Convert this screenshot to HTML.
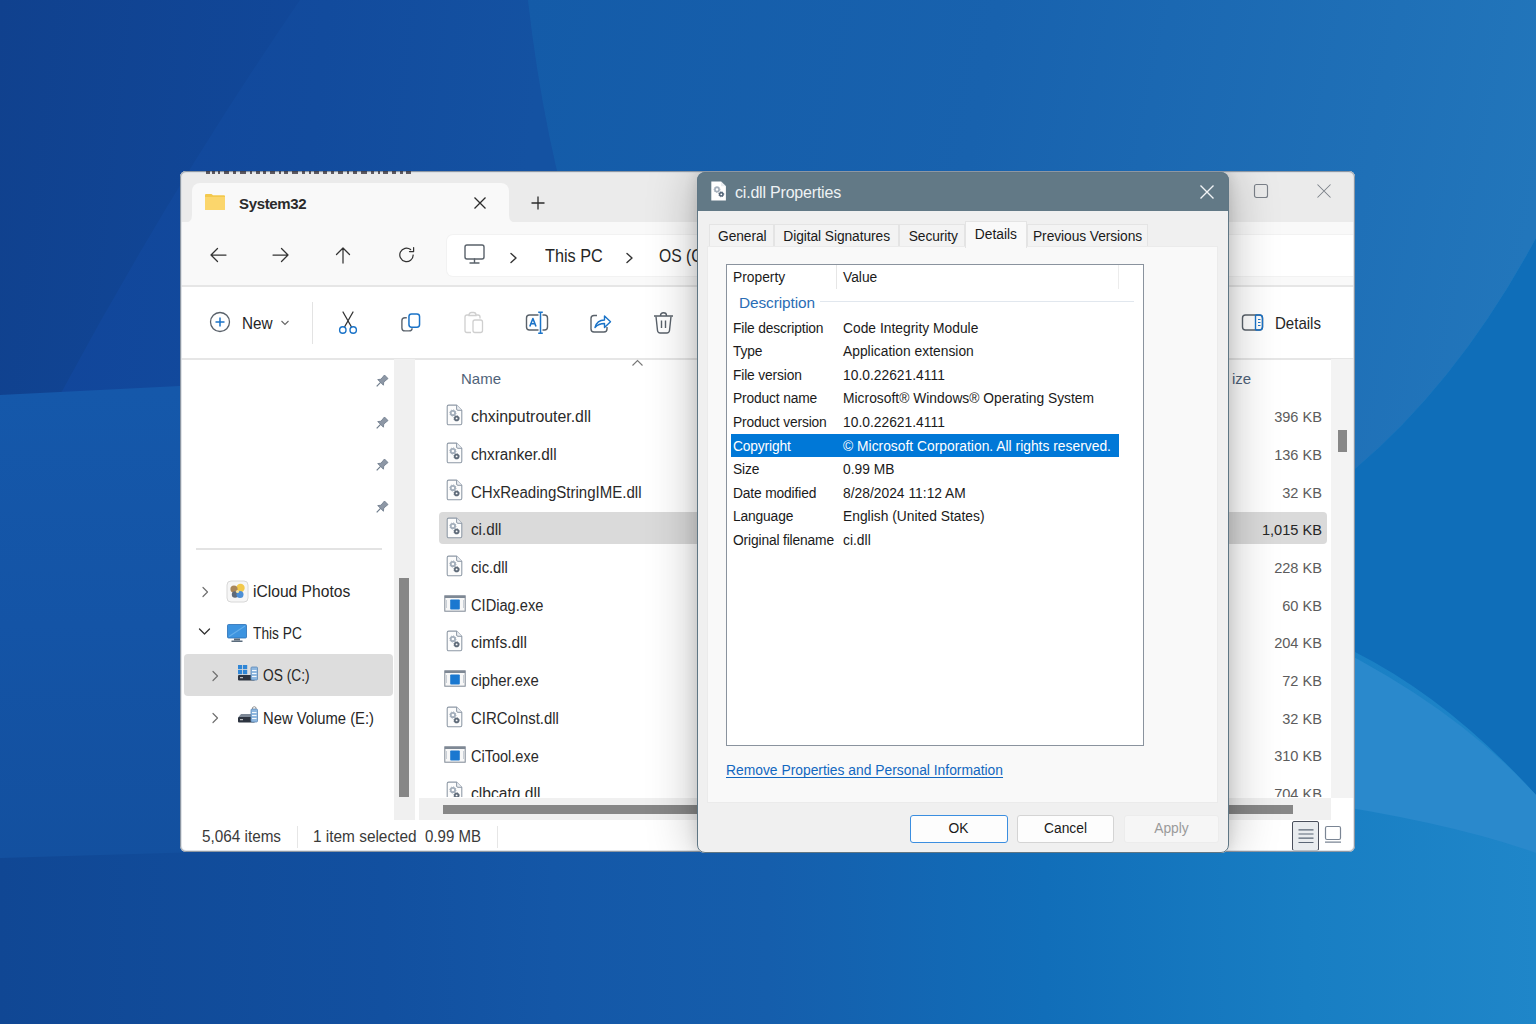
<!DOCTYPE html>
<html><head><meta charset="utf-8">
<style>
*{box-sizing:border-box;margin:0;padding:0}
html,body{width:1536px;height:1024px;overflow:hidden}
body{position:relative;font-family:"Liberation Sans",sans-serif;color:#1b1b1b;background:#1457a6}
.a{position:absolute}
.t{position:absolute;white-space:nowrap;line-height:1}
svg.a{overflow:visible}
</style></head><body>
<svg class="a" style="left:0;top:0" width="1536" height="1024" viewBox="0 0 1536 1024">
<defs>
<linearGradient id="gb" x1="0" y1="0" x2="1536" y2="0" gradientUnits="userSpaceOnUse"><stop offset="0" stop-color="#104794"/><stop offset="0.25" stop-color="#1250a0"/><stop offset="0.36" stop-color="#1457a7"/><stop offset="0.5" stop-color="#155eac"/><stop offset="0.68" stop-color="#116eb9"/><stop offset="0.85" stop-color="#187ec3"/><stop offset="1" stop-color="#1f86c9"/></linearGradient>
<linearGradient id="g1" x1="528" y1="0" x2="1536" y2="200" gradientUnits="userSpaceOnUse"><stop offset="0" stop-color="#145ba8"/><stop offset="0.45" stop-color="#1862ae"/><stop offset="1" stop-color="#2276bb"/></linearGradient>
<linearGradient id="gm" x1="0" y1="390" x2="0" y2="860" gradientUnits="userSpaceOnUse"><stop offset="0" stop-color="#1558aa"/><stop offset="0.5" stop-color="#1454a6"/><stop offset="1" stop-color="#13509f"/></linearGradient>
<linearGradient id="gtl" x1="0" y1="0" x2="540" y2="60" gradientUnits="userSpaceOnUse"><stop offset="0" stop-color="#10418e"/><stop offset="0.6" stop-color="#11489a"/><stop offset="1" stop-color="#1351a1"/></linearGradient>
<linearGradient id="gtl2" x1="0" y1="0" x2="540" y2="60" gradientUnits="userSpaceOnUse"><stop offset="0" stop-color="#11449a"/><stop offset="0.6" stop-color="#124b9d"/><stop offset="1" stop-color="#1452a2"/></linearGradient>
</defs>
<rect width="1536" height="1024" fill="url(#gb)"/>
<path d="M0 0 L528 0 Q 545 150 585 270 L 640 392 L0 395 Z" fill="url(#gtl)"/>
<path d="M300 0 Q 170 190 60 395 L 640 392 L 585 270 Q 545 150 528 0 Z" fill="url(#gtl2)"/>
<path d="M0 395 L180 386 L 700 380 L 700 851 L 200 852 L 0 858 Z" fill="url(#gm)"/>
<path d="M528 0 Q 545 150 585 270 L 700 380 L 900 520 L 1355 469 Q 1460 380 1536 238 L1536 0 Z" fill="url(#g1)"/>
<path d="M1355 469 Q 1460 380 1536 238 L1536 795 Q 1450 700 1355 652 Z" fill="#0f6eb9"/>
<path d="M1300 630 Q 1450 700 1536 795 L1536 853 Q 1450 822 1300 800 Z" fill="#2a89cc"/>
</svg>
<div class="a" style="left:0;top:0;width:1536px;height:1024px;clip-path:inset(171px 181px 172px 180px round 6px)">
<div class="a" style="left:180px;top:171px;width:1175px;height:681px;background:#ffffff;"></div>
<div class="a" style="left:180px;top:171px;width:1175px;height:51px;background:#ebebeb;"></div>
<div class="a" style="left:192px;top:183px;width:317px;height:40px;background:#f9f9f9;border-radius:8px 8px 0 0"></div>
<svg class="a" style="left:184px;top:215px;" width="8" height="8" viewBox="0 0 8 8"><path d="M0 8 Q8 8 8 0 L8 8Z" fill="#f9f9f9"/></svg>
<svg class="a" style="left:509px;top:215px;" width="8" height="8" viewBox="0 0 8 8"><path d="M8 8 Q0 8 0 0 L0 8Z" fill="#f9f9f9"/></svg>
<svg class="a" style="left:204px;top:193px;" width="22" height="18" viewBox="0 0 22 18"><path d="M1 2 Q1 1 2 1 H7.5 L9 2.2 H20 Q21 2.2 21 3.2 V16 Q21 17 20 17 H2 Q1 17 1 16Z" fill="#f3c94e"/><path d="M1 4 H21 V16 Q21 17 20 17 H2 Q1 17 1 16Z" fill="#fbd66c"/></svg>
<div class="t" style="left:239.00px;top:196.10px;font-size:15px;color:#2b2b2b;font-weight:700;letter-spacing:-0.35px;">System32</div>
<svg class="a" style="left:473px;top:196px;" width="14" height="14" viewBox="0 0 14 14"><path d="M1.5 1.5 L12.5 12.5 M12.5 1.5 L1.5 12.5" stroke="#2b2b2b" stroke-width="1.3" fill="none"/></svg>
<svg class="a" style="left:531px;top:196px;" width="14" height="14" viewBox="0 0 14 14"><path d="M7 0.5 V13.5 M0.5 7 H13.5" stroke="#2b2b2b" stroke-width="1.3" fill="none"/></svg>
<svg class="a" style="left:1253px;top:183px;" width="16" height="16" viewBox="0 0 16 16"><rect x="1.5" y="1.5" width="13" height="13" rx="2" stroke="#7b8189" stroke-width="1.15" fill="none"/></svg>
<svg class="a" style="left:1316px;top:183px;" width="16" height="16" viewBox="0 0 16 16"><path d="M1.5 1.5 L14.5 14.5 M14.5 1.5 L1.5 14.5" stroke="#7b8189" stroke-width="1.05" fill="none"/></svg>
<div class="a" style="left:180px;top:222px;width:1175px;height:64px;background:#f9f9f9;"></div>
<svg class="a" style="left:209px;top:246px;" width="18" height="18" viewBox="0 0 18 18"><path d="M17 9 H2 M8.5 2.5 L2 9 L8.5 15.5" stroke="#333333" stroke-width="1.25" fill="none" stroke-linejoin="round" stroke-linecap="round"/></svg>
<svg class="a" style="left:272px;top:246px;" width="18" height="18" viewBox="0 0 18 18"><path d="M1 9 H16 M9.5 2.5 L16 9 L9.5 15.5" stroke="#333333" stroke-width="1.25" fill="none" stroke-linejoin="round" stroke-linecap="round"/></svg>
<svg class="a" style="left:334px;top:246px;" width="18" height="18" viewBox="0 0 18 18"><path d="M9 17 V2 M2.5 8.5 L9 2 L15.5 8.5" stroke="#333333" stroke-width="1.25" fill="none" stroke-linejoin="round" stroke-linecap="round"/></svg>
<svg class="a" style="left:398px;top:246px;" width="18" height="18" viewBox="0 0 18 18"><path d="M15.2 9 A6.7 6.7 0 1 1 12.6 3.6" stroke="#333333" stroke-width="1.25" fill="none" stroke-linecap="round"/><path d="M15.6 1.5 V5.6 H11.5" stroke="#333333" stroke-width="1.25" fill="none" stroke-linejoin="round" stroke-linecap="round"/></svg>
<div class="a" style="left:447px;top:235px;width:923px;height:41px;background:#ffffff;border-radius:6px;box-shadow:0 0 0 1px #f2f2f2"></div>
<svg class="a" style="left:463px;top:243px;" width="24" height="22" viewBox="0 0 24 22"><rect x="2" y="2" width="19" height="14" rx="2" stroke="#59616a" stroke-width="1.4" fill="none"/><path d="M11.5 16 V19.5 M7 20 H16" stroke="#59616a" stroke-width="1.4" fill="none" stroke-linecap="round"/></svg>
<svg class="a" style="left:509px;top:251.5px;" width="10" height="12" viewBox="0 0 10 12"><path d="M2 1.5 L7 6 L2 10.5" stroke="#333" stroke-width="1.4" fill="none" stroke-linecap="round" stroke-linejoin="round"/></svg>
<div class="t" style="left:544.90px;top:247.06px;font-size:18px;color:#262626;transform:scaleX(0.9015625);transform-origin:0 0;">This PC</div>
<svg class="a" style="left:625px;top:251.5px;" width="10" height="12" viewBox="0 0 10 12"><path d="M2 1.5 L7 6 L2 10.5" stroke="#333" stroke-width="1.4" fill="none" stroke-linecap="round" stroke-linejoin="round"/></svg>
<div class="t" style="left:658.80px;top:247.06px;font-size:18px;color:#262626;transform:scaleX(0.87);transform-origin:0 0;">OS (C:)</div>
<div class="a" style="left:180px;top:285px;width:1175px;height:2px;background:#e6e6e6;"></div>
<div class="a" style="left:180px;top:358px;width:1175px;height:2px;background:#e6e6e6;"></div>
<svg class="a" style="left:209px;top:311px;" width="22" height="22" viewBox="0 0 22 22"><circle cx="11" cy="11" r="9.5" stroke="#59616a" stroke-width="1.3" fill="none"/><path d="M11 6.5 V15.5 M6.5 11 H15.5" stroke="#1a73c8" stroke-width="1.5" fill="none"/></svg>
<div class="t" style="left:242.30px;top:315.29px;font-size:16.2px;color:#262626;transform:scaleX(0.9444444444444445);transform-origin:0 0;">New</div>
<svg class="a" style="left:280px;top:319px;" width="10" height="8" viewBox="0 0 10 8"><path d="M1.5 2 L5 5.5 L8.5 2" stroke="#666" stroke-width="1.1" fill="none"/></svg>
<div class="a" style="left:312px;top:302px;width:1px;height:42px;background:#e3e3e3;"></div>
<svg class="a" style="left:337px;top:311px;" width="22" height="24" viewBox="0 0 22 24"><path d="M6 1 L14.5 16 M16 1 L7.5 16" stroke="#333" stroke-width="1.3" fill="none" stroke-linecap="round"/><circle cx="5.8" cy="19" r="3.2" stroke="#1a73c8" stroke-width="1.4" fill="none"/><circle cx="16.2" cy="19" r="3.2" stroke="#1a73c8" stroke-width="1.4" fill="none"/></svg>
<svg class="a" style="left:400px;top:312px;" width="22" height="22" viewBox="0 0 22 22"><path d="M6.8 5.8 H4.9 Q1.9 5.8 1.9 8.8 V15.9 Q1.9 18.9 4.9 18.9 H9.1 Q12.1 18.9 12.1 16.2" stroke="#5d656e" stroke-width="1.4" fill="none"/><rect x="8.95" y="1.95" width="10.6" height="13.2" rx="2.6" stroke="#1a73c8" stroke-width="1.5" fill="none"/></svg>
<svg class="a" style="left:463px;top:311px;" width="22" height="24" viewBox="0 0 22 24"><path d="M6 4 H4 Q2 4 2 6 V19.5 Q2 21.5 4 21.5 H8" stroke="#cfcfcf" stroke-width="1.3" fill="none"/><path d="M6 4 Q6 1.5 8.5 1.5 H10.5 Q13 1.5 13 4 V4.5 H6Z" stroke="#cfcfcf" stroke-width="1.3" fill="none"/><path d="M13 4 H15 Q17 4 17 6 V7.5" stroke="#cfcfcf" stroke-width="1.3" fill="none"/><rect x="10" y="9" width="9.5" height="12.5" rx="2" stroke="#cfcfcf" stroke-width="1.3" fill="none"/></svg>
<svg class="a" style="left:525px;top:311px;" width="24" height="24" viewBox="0 0 24 24"><path d="M13.5 4 H4.5 Q1.5 4 1.5 7 V16 Q1.5 19 4.5 19 H13.5 M17.5 4 H19.5 Q22.5 4 22.5 7 V16 Q22.5 19 19.5 19 H17.5" stroke="#59616a" stroke-width="1.4" fill="none"/><path d="M15.5 1.2 V22.3 M13.2 1.2 H17.8 M13.2 22.3 H17.8" stroke="#1a73c8" stroke-width="1.5" fill="none"/><path d="M4.8 15.5 L7.9 7.5 L11 15.5 M5.9 12.8 H9.9" stroke="#1a73c8" stroke-width="1.6" fill="none" stroke-linejoin="round"/></svg>
<svg class="a" style="left:589px;top:312px;" width="23" height="22" viewBox="0 0 23 22"><path d="M8 3.5 H5 Q2 3.5 2 6.5 V17 Q2 20 5 20 H15 Q18 20 18 17 V15" stroke="#59616a" stroke-width="1.4" fill="none"/><path d="M6 15.5 Q8 8 15.5 8 V4 L21.5 9.8 L15.5 15.5 V11.5 Q9.5 11.5 6 15.5Z" stroke="#1a73c8" stroke-width="1.4" fill="none" stroke-linejoin="round"/></svg>
<svg class="a" style="left:652px;top:311px;" width="23" height="24" viewBox="0 0 23 24"><path d="M2 5 H21 M8.5 4.5 Q8.5 1.8 11.5 1.8 Q14.5 1.8 14.5 4.5" stroke="#59616a" stroke-width="1.4" fill="none"/><path d="M4 5.5 L5.5 19.5 Q5.8 22 8.3 22 H14.7 Q17.2 22 17.5 19.5 L19 5.5" stroke="#59616a" stroke-width="1.4" fill="none"/><path d="M9.5 9.5 V17 M13.5 9.5 V17" stroke="#59616a" stroke-width="1.4"/></svg>
<svg class="a" style="left:1241px;top:313px;" width="24" height="19" viewBox="0 0 24 19"><rect x="1.5" y="2" width="20" height="15" rx="3" stroke="#59616a" stroke-width="1.4" fill="none"/><path d="M14.5 2 V17" stroke="#1a73c8" stroke-width="1.4"/><path d="M14.5 2 H18.5 Q21.5 2 21.5 5 V14 Q21.5 17 18.5 17 H14.5" stroke="#1a73c8" stroke-width="1.4" fill="none"/><path d="M17 6.5 H19.5 M17 9.5 H19.5 M17 12.5 H19.5" stroke="#1a73c8" stroke-width="1"/></svg>
<div class="t" style="left:1274.60px;top:315.29px;font-size:16.2px;color:#262626;transform:scaleX(0.9292929292929293);transform-origin:0 0;">Details</div>
<svg class="a" style="left:373.5px;top:373px;" width="16" height="16" viewBox="0 0 16 16"><g transform="rotate(45 8 8)"><path d="M5.5 2 H10.5 L10 7.5 L12 10 H4 L6 7.5Z" fill="#8d97a5" stroke="#6f7c8c" stroke-width="0.8" stroke-linejoin="round"/><path d="M8 10 V15.5" stroke="#6f7c8c" stroke-width="1.2"/></g></svg>
<svg class="a" style="left:373.5px;top:415px;" width="16" height="16" viewBox="0 0 16 16"><g transform="rotate(45 8 8)"><path d="M5.5 2 H10.5 L10 7.5 L12 10 H4 L6 7.5Z" fill="#8d97a5" stroke="#6f7c8c" stroke-width="0.8" stroke-linejoin="round"/><path d="M8 10 V15.5" stroke="#6f7c8c" stroke-width="1.2"/></g></svg>
<svg class="a" style="left:373.5px;top:457px;" width="16" height="16" viewBox="0 0 16 16"><g transform="rotate(45 8 8)"><path d="M5.5 2 H10.5 L10 7.5 L12 10 H4 L6 7.5Z" fill="#8d97a5" stroke="#6f7c8c" stroke-width="0.8" stroke-linejoin="round"/><path d="M8 10 V15.5" stroke="#6f7c8c" stroke-width="1.2"/></g></svg>
<svg class="a" style="left:373.5px;top:499px;" width="16" height="16" viewBox="0 0 16 16"><g transform="rotate(45 8 8)"><path d="M5.5 2 H10.5 L10 7.5 L12 10 H4 L6 7.5Z" fill="#8d97a5" stroke="#6f7c8c" stroke-width="0.8" stroke-linejoin="round"/><path d="M8 10 V15.5" stroke="#6f7c8c" stroke-width="1.2"/></g></svg>
<div class="a" style="left:196px;top:548px;width:186px;height:2px;background:#e3e3e3;"></div>
<svg class="a" style="left:200.5px;top:585.5px;" width="9" height="12" viewBox="0 0 9 12"><path d="M2 1.5 L6.5 6 L2 10.5" stroke="#707070" stroke-width="1.2" fill="none" stroke-linecap="round" stroke-linejoin="round"/></svg>
<svg class="a" style="left:226px;top:580px;" width="23" height="23" viewBox="0 0 23 23"><rect x="1" y="1" width="21" height="21" rx="4" fill="#f6f6f6" stroke="#d8d8d8" stroke-width="1"/><circle cx="14.5" cy="8" r="4.2" fill="#f2c94c"/><circle cx="8" cy="9" r="3.6" fill="#a8865a"/><circle cx="9" cy="14.5" r="3.2" fill="#5f6b7a"/><circle cx="14" cy="14.5" r="3.5" fill="#4d8fd6"/><circle cx="11.5" cy="11.5" r="1.6" fill="#f7e3a0"/></svg>
<div class="t" style="left:252.50px;top:584.16px;font-size:16px;color:#262626;transform:scaleX(0.9759036144578314);transform-origin:0 0;">iCloud Photos</div>
<svg class="a" style="left:198px;top:627px;" width="13" height="9" viewBox="0 0 13 9"><path d="M1.5 2 L6.5 7 L11.5 2" stroke="#333" stroke-width="1.3" fill="none" stroke-linecap="round" stroke-linejoin="round"/></svg>
<svg class="a" style="left:226px;top:623px;" width="22" height="20" viewBox="0 0 22 20"><rect x="1.5" y="1.5" width="19" height="13.5" rx="1" fill="#3d94e0" stroke="#2a6fb5" stroke-width="0.8"/><path d="M3 13.5 L19 3" stroke="#7ec0f2" stroke-width="1.2" opacity=".6"/><rect x="8" y="15.5" width="6" height="2" fill="#5a6b7c"/><rect x="5.5" y="17.5" width="11" height="1.5" fill="#5a6b7c"/></svg>
<div class="t" style="left:252.80px;top:626.06px;font-size:16px;color:#262626;transform:scaleX(0.8576449912126537);transform-origin:0 0;">This PC</div>
<div class="a" style="left:184px;top:654px;width:209px;height:42px;background:#dddddd;border-radius:4px"></div>
<svg class="a" style="left:210.5px;top:670px;" width="9" height="12" viewBox="0 0 9 12"><path d="M2 1.5 L6.5 6 L2 10.5" stroke="#707070" stroke-width="1.2" fill="none" stroke-linecap="round" stroke-linejoin="round"/></svg>
<svg class="a" style="left:236px;top:663px;" width="24" height="19" viewBox="0 0 24 19"><rect x="2" y="2" width="4.2" height="4.2" fill="#2f86d6"/><rect x="7" y="2" width="4.2" height="4.2" fill="#2f86d6"/><rect x="2" y="7" width="4.2" height="4.2" fill="#2f86d6"/><rect x="7" y="7" width="4.2" height="4.2" fill="#2f86d6"/><rect x="2" y="12" width="17" height="5.5" rx="1" fill="#2d3440"/><rect x="4" y="14.2" width="3" height="1" fill="#ddd"/><rect x="15" y="4" width="6.5" height="13" rx="1" fill="#8fb8e0" stroke="#5a88b8" stroke-width=".8"/><path d="M16 7.5 H20.5 M16 10.5 H20.5 M16 13.5 H20.5" stroke="#fff" stroke-width=".9"/></svg>
<div class="t" style="left:263.00px;top:668.26px;font-size:16px;color:#262626;transform:scaleX(0.8597785977859779);transform-origin:0 0;">OS (C:)</div>
<svg class="a" style="left:210.5px;top:712px;" width="9" height="12" viewBox="0 0 9 12"><path d="M2 1.5 L6.5 6 L2 10.5" stroke="#707070" stroke-width="1.2" fill="none" stroke-linecap="round" stroke-linejoin="round"/></svg>
<svg class="a" style="left:236px;top:705px;" width="24" height="19" viewBox="0 0 24 19"><rect x="2" y="12" width="17" height="5.5" rx="1" fill="#2d3440"/><path d="M2.5 12 L5 9 H17 L19 12Z" fill="#7d8896"/><rect x="4" y="14.2" width="3" height="1" fill="#ddd"/><rect x="15" y="4" width="6.5" height="13" rx="1" fill="#8fb8e0" stroke="#5a88b8" stroke-width=".8"/><path d="M16 7.5 H20.5 M16 10.5 H20.5 M16 13.5 H20.5" stroke="#fff" stroke-width=".9"/><path d="M16.5 4 V2.5 Q18.2 0.8 20 2.5 V4" stroke="#888" stroke-width=".9" fill="none"/></svg>
<div class="t" style="left:263.40px;top:710.66px;font-size:16px;color:#262626;transform:scaleX(0.925);transform-origin:0 0;">New Volume (E:)</div>
<div class="a" style="left:394px;top:359px;width:21px;height:461px;background:#f0f0f0;"></div>
<div class="a" style="left:399px;top:578px;width:10px;height:219px;background:#878787;"></div>
<div class="a" style="left:419px;top:798px;width:912px;height:22px;background:#f0f0f0;"></div>
<div class="a" style="left:1331px;top:359px;width:24px;height:439px;background:#f3f3f3;"></div>
<div class="a" style="left:1338px;top:430px;width:9px;height:22px;background:#878787;"></div>
<div class="t" style="left:461.00px;top:371.30px;font-size:15px;color:#4f6379;">Name</div>
<svg class="a" style="left:631px;top:359px;" width="13" height="8" viewBox="0 0 13 8"><path d="M1.5 6.5 L6.5 1.5 L11.5 6.5" stroke="#777" stroke-width="1.1" fill="none"/></svg>
<div class="t" style="left:1232.00px;top:371.30px;font-size:15px;color:#4f6379;">ize</div>
<div class="a" style="left:419px;top:359px;width:912px;height:438px;overflow:hidden">
<svg class="a" style="left:27px;top:45px;" width="17" height="22" viewBox="0 0 17 22"><path d="M1.2 2.6 Q1.2 1.1 2.7 1.1 H10.6 L15.8 6.3 V19.3 Q15.8 20.8 14.3 20.8 H2.7 Q1.2 20.8 1.2 19.3Z" fill="#fcfcfc" stroke="#8d98a5" stroke-width="1.05" stroke-linejoin="round"/><path d="M10.6 1.1 V5 Q10.6 6.3 11.9 6.3 H15.8" fill="#e9edf1" stroke="#8d98a5" stroke-width="1" stroke-linejoin="round"/><circle cx="6.9" cy="9" r="2.2" fill="none" stroke="#a3aebb" stroke-width="1.8"/><circle cx="6.9" cy="9" r="3.1" fill="none" stroke="#a3aebb" stroke-width="1" stroke-dasharray="1.2 1.2"/><circle cx="10.6" cy="14.4" r="1.8" fill="none" stroke="#5f6b79" stroke-width="1.7"/><circle cx="10.6" cy="14.4" r="2.7" fill="none" stroke="#5f6b79" stroke-width="0.9" stroke-dasharray="1.1 1.0"/></svg>
<div class="t" style="left:52px;top:50.26px;font-size:16px;color:#2a2a2a;transform:scaleX(0.9917);transform-origin:0 0">chxinputrouter.dll</div>
<div class="t" style="right:9px;top:51.14px;font-size:14.6px;color:#5c5c5c">396 KB</div>
<svg class="a" style="left:27px;top:83px;" width="17" height="22" viewBox="0 0 17 22"><path d="M1.2 2.6 Q1.2 1.1 2.7 1.1 H10.6 L15.8 6.3 V19.3 Q15.8 20.8 14.3 20.8 H2.7 Q1.2 20.8 1.2 19.3Z" fill="#fcfcfc" stroke="#8d98a5" stroke-width="1.05" stroke-linejoin="round"/><path d="M10.6 1.1 V5 Q10.6 6.3 11.9 6.3 H15.8" fill="#e9edf1" stroke="#8d98a5" stroke-width="1" stroke-linejoin="round"/><circle cx="6.9" cy="9" r="2.2" fill="none" stroke="#a3aebb" stroke-width="1.8"/><circle cx="6.9" cy="9" r="3.1" fill="none" stroke="#a3aebb" stroke-width="1" stroke-dasharray="1.2 1.2"/><circle cx="10.6" cy="14.4" r="1.8" fill="none" stroke="#5f6b79" stroke-width="1.7"/><circle cx="10.6" cy="14.4" r="2.7" fill="none" stroke="#5f6b79" stroke-width="0.9" stroke-dasharray="1.1 1.0"/></svg>
<div class="t" style="left:52px;top:87.96px;font-size:16px;color:#2a2a2a;transform:scaleX(0.9521);transform-origin:0 0">chxranker.dll</div>
<div class="t" style="right:9px;top:88.84px;font-size:14.6px;color:#5c5c5c">136 KB</div>
<svg class="a" style="left:27px;top:120px;" width="17" height="22" viewBox="0 0 17 22"><path d="M1.2 2.6 Q1.2 1.1 2.7 1.1 H10.6 L15.8 6.3 V19.3 Q15.8 20.8 14.3 20.8 H2.7 Q1.2 20.8 1.2 19.3Z" fill="#fcfcfc" stroke="#8d98a5" stroke-width="1.05" stroke-linejoin="round"/><path d="M10.6 1.1 V5 Q10.6 6.3 11.9 6.3 H15.8" fill="#e9edf1" stroke="#8d98a5" stroke-width="1" stroke-linejoin="round"/><circle cx="6.9" cy="9" r="2.2" fill="none" stroke="#a3aebb" stroke-width="1.8"/><circle cx="6.9" cy="9" r="3.1" fill="none" stroke="#a3aebb" stroke-width="1" stroke-dasharray="1.2 1.2"/><circle cx="10.6" cy="14.4" r="1.8" fill="none" stroke="#5f6b79" stroke-width="1.7"/><circle cx="10.6" cy="14.4" r="2.7" fill="none" stroke="#5f6b79" stroke-width="0.9" stroke-dasharray="1.1 1.0"/></svg>
<div class="t" style="left:52px;top:125.66px;font-size:16px;color:#2a2a2a;transform:scaleX(0.9399);transform-origin:0 0">CHxReadingStringIME.dll</div>
<div class="t" style="right:9px;top:126.54px;font-size:14.6px;color:#5c5c5c">32 KB</div>
<div class="a" style="left:20px;top:153px;width:888px;height:32px;background:#dadada;border-radius:4px"></div>
<svg class="a" style="left:27px;top:158px;" width="17" height="22" viewBox="0 0 17 22"><path d="M1.2 2.6 Q1.2 1.1 2.7 1.1 H10.6 L15.8 6.3 V19.3 Q15.8 20.8 14.3 20.8 H2.7 Q1.2 20.8 1.2 19.3Z" fill="#fcfcfc" stroke="#8d98a5" stroke-width="1.05" stroke-linejoin="round"/><path d="M10.6 1.1 V5 Q10.6 6.3 11.9 6.3 H15.8" fill="#e9edf1" stroke="#8d98a5" stroke-width="1" stroke-linejoin="round"/><circle cx="6.9" cy="9" r="2.2" fill="none" stroke="#a3aebb" stroke-width="1.8"/><circle cx="6.9" cy="9" r="3.1" fill="none" stroke="#a3aebb" stroke-width="1" stroke-dasharray="1.2 1.2"/><circle cx="10.6" cy="14.4" r="1.8" fill="none" stroke="#5f6b79" stroke-width="1.7"/><circle cx="10.6" cy="14.4" r="2.7" fill="none" stroke="#5f6b79" stroke-width="0.9" stroke-dasharray="1.1 1.0"/></svg>
<div class="t" style="left:52px;top:163.36px;font-size:16px;color:#2a2a2a;transform:scaleX(0.9531);transform-origin:0 0">ci.dll</div>
<div class="t" style="right:9px;top:164.24px;font-size:14.6px;color:#262626">1,015 KB</div>
<svg class="a" style="left:27px;top:196px;" width="17" height="22" viewBox="0 0 17 22"><path d="M1.2 2.6 Q1.2 1.1 2.7 1.1 H10.6 L15.8 6.3 V19.3 Q15.8 20.8 14.3 20.8 H2.7 Q1.2 20.8 1.2 19.3Z" fill="#fcfcfc" stroke="#8d98a5" stroke-width="1.05" stroke-linejoin="round"/><path d="M10.6 1.1 V5 Q10.6 6.3 11.9 6.3 H15.8" fill="#e9edf1" stroke="#8d98a5" stroke-width="1" stroke-linejoin="round"/><circle cx="6.9" cy="9" r="2.2" fill="none" stroke="#a3aebb" stroke-width="1.8"/><circle cx="6.9" cy="9" r="3.1" fill="none" stroke="#a3aebb" stroke-width="1" stroke-dasharray="1.2 1.2"/><circle cx="10.6" cy="14.4" r="1.8" fill="none" stroke="#5f6b79" stroke-width="1.7"/><circle cx="10.6" cy="14.4" r="2.7" fill="none" stroke="#5f6b79" stroke-width="0.9" stroke-dasharray="1.1 1.0"/></svg>
<div class="t" style="left:52px;top:201.06px;font-size:16px;color:#2a2a2a;transform:scaleX(0.9200);transform-origin:0 0">cic.dll</div>
<div class="t" style="right:9px;top:201.94px;font-size:14.6px;color:#5c5c5c">228 KB</div>
<svg class="a" style="left:25px;top:236px;" width="22" height="17" viewBox="0 0 22 17"><rect x="0.8" y="0.8" width="20.4" height="15.4" fill="#f7f7f7" stroke="#7e8894" stroke-width="1"/><rect x="0.8" y="0.8" width="20.4" height="2.2" fill="#7e8894"/><rect x="6.2" y="4.5" width="9.6" height="10" rx=".8" fill="#1a78d0"/><path d="M2.5 5 V13 M19.5 5 V13" stroke="#c9cfd6" stroke-width="1"/></svg>
<div class="t" style="left:52px;top:238.76px;font-size:16px;color:#2a2a2a;transform:scaleX(0.9154);transform-origin:0 0">CIDiag.exe</div>
<div class="t" style="right:9px;top:239.64px;font-size:14.6px;color:#5c5c5c">60 KB</div>
<svg class="a" style="left:27px;top:271px;" width="17" height="22" viewBox="0 0 17 22"><path d="M1.2 2.6 Q1.2 1.1 2.7 1.1 H10.6 L15.8 6.3 V19.3 Q15.8 20.8 14.3 20.8 H2.7 Q1.2 20.8 1.2 19.3Z" fill="#fcfcfc" stroke="#8d98a5" stroke-width="1.05" stroke-linejoin="round"/><path d="M10.6 1.1 V5 Q10.6 6.3 11.9 6.3 H15.8" fill="#e9edf1" stroke="#8d98a5" stroke-width="1" stroke-linejoin="round"/><circle cx="6.9" cy="9" r="2.2" fill="none" stroke="#a3aebb" stroke-width="1.8"/><circle cx="6.9" cy="9" r="3.1" fill="none" stroke="#a3aebb" stroke-width="1" stroke-dasharray="1.2 1.2"/><circle cx="10.6" cy="14.4" r="1.8" fill="none" stroke="#5f6b79" stroke-width="1.7"/><circle cx="10.6" cy="14.4" r="2.7" fill="none" stroke="#5f6b79" stroke-width="0.9" stroke-dasharray="1.1 1.0"/></svg>
<div class="t" style="left:52px;top:276.46px;font-size:16px;color:#2a2a2a;transform:scaleX(0.9689);transform-origin:0 0">cimfs.dll</div>
<div class="t" style="right:9px;top:277.34px;font-size:14.6px;color:#5c5c5c">204 KB</div>
<svg class="a" style="left:25px;top:311px;" width="22" height="17" viewBox="0 0 22 17"><rect x="0.8" y="0.8" width="20.4" height="15.4" fill="#f7f7f7" stroke="#7e8894" stroke-width="1"/><rect x="0.8" y="0.8" width="20.4" height="2.2" fill="#7e8894"/><rect x="6.2" y="4.5" width="9.6" height="10" rx=".8" fill="#1a78d0"/><path d="M2.5 5 V13 M19.5 5 V13" stroke="#c9cfd6" stroke-width="1"/></svg>
<div class="t" style="left:52px;top:314.16px;font-size:16px;color:#2a2a2a;transform:scaleX(0.9287);transform-origin:0 0">cipher.exe</div>
<div class="t" style="right:9px;top:315.04px;font-size:14.6px;color:#5c5c5c">72 KB</div>
<svg class="a" style="left:27px;top:347px;" width="17" height="22" viewBox="0 0 17 22"><path d="M1.2 2.6 Q1.2 1.1 2.7 1.1 H10.6 L15.8 6.3 V19.3 Q15.8 20.8 14.3 20.8 H2.7 Q1.2 20.8 1.2 19.3Z" fill="#fcfcfc" stroke="#8d98a5" stroke-width="1.05" stroke-linejoin="round"/><path d="M10.6 1.1 V5 Q10.6 6.3 11.9 6.3 H15.8" fill="#e9edf1" stroke="#8d98a5" stroke-width="1" stroke-linejoin="round"/><circle cx="6.9" cy="9" r="2.2" fill="none" stroke="#a3aebb" stroke-width="1.8"/><circle cx="6.9" cy="9" r="3.1" fill="none" stroke="#a3aebb" stroke-width="1" stroke-dasharray="1.2 1.2"/><circle cx="10.6" cy="14.4" r="1.8" fill="none" stroke="#5f6b79" stroke-width="1.7"/><circle cx="10.6" cy="14.4" r="2.7" fill="none" stroke="#5f6b79" stroke-width="0.9" stroke-dasharray="1.1 1.0"/></svg>
<div class="t" style="left:52px;top:351.86px;font-size:16px;color:#2a2a2a;transform:scaleX(0.9321);transform-origin:0 0">CIRCoInst.dll</div>
<div class="t" style="right:9px;top:352.74px;font-size:14.6px;color:#5c5c5c">32 KB</div>
<svg class="a" style="left:25px;top:387px;" width="22" height="17" viewBox="0 0 22 17"><rect x="0.8" y="0.8" width="20.4" height="15.4" fill="#f7f7f7" stroke="#7e8894" stroke-width="1"/><rect x="0.8" y="0.8" width="20.4" height="2.2" fill="#7e8894"/><rect x="6.2" y="4.5" width="9.6" height="10" rx=".8" fill="#1a78d0"/><path d="M2.5 5 V13 M19.5 5 V13" stroke="#c9cfd6" stroke-width="1"/></svg>
<div class="t" style="left:52px;top:389.56px;font-size:16px;color:#2a2a2a;transform:scaleX(0.9063);transform-origin:0 0">CiTool.exe</div>
<div class="t" style="right:9px;top:390.44px;font-size:14.6px;color:#5c5c5c">310 KB</div>
<svg class="a" style="left:27px;top:422px;" width="17" height="22" viewBox="0 0 17 22"><path d="M1.2 2.6 Q1.2 1.1 2.7 1.1 H10.6 L15.8 6.3 V19.3 Q15.8 20.8 14.3 20.8 H2.7 Q1.2 20.8 1.2 19.3Z" fill="#fcfcfc" stroke="#8d98a5" stroke-width="1.05" stroke-linejoin="round"/><path d="M10.6 1.1 V5 Q10.6 6.3 11.9 6.3 H15.8" fill="#e9edf1" stroke="#8d98a5" stroke-width="1" stroke-linejoin="round"/><circle cx="6.9" cy="9" r="2.2" fill="none" stroke="#a3aebb" stroke-width="1.8"/><circle cx="6.9" cy="9" r="3.1" fill="none" stroke="#a3aebb" stroke-width="1" stroke-dasharray="1.2 1.2"/><circle cx="10.6" cy="14.4" r="1.8" fill="none" stroke="#5f6b79" stroke-width="1.7"/><circle cx="10.6" cy="14.4" r="2.7" fill="none" stroke="#5f6b79" stroke-width="0.9" stroke-dasharray="1.1 1.0"/></svg>
<div class="t" style="left:52px;top:427.26px;font-size:16px;color:#2a2a2a;transform:scaleX(0.9761);transform-origin:0 0">clbcatq.dll</div>
<div class="t" style="right:9px;top:428.14px;font-size:14.6px;color:#5c5c5c">704 KB</div>
</div>
<div class="a" style="left:443px;top:805px;width:850px;height:9px;background:#878787;"></div>
<div class="t" style="left:202.00px;top:828.66px;font-size:16px;color:#3a3a3a;transform:scaleX(0.9552599758162031);transform-origin:0 0;">5,064 items</div>
<div class="a" style="left:297px;top:826px;width:1px;height:22px;background:#e6e6e6;"></div>
<div class="t" style="left:312.50px;top:828.66px;font-size:16px;color:#3a3a3a;transform:scaleX(0.9618959107806692);transform-origin:0 0;">1 item selected</div>
<div class="t" style="left:425.00px;top:828.66px;font-size:16px;color:#3a3a3a;transform:scaleX(0.9395973154362416);transform-origin:0 0;">0.99 MB</div>
<div class="a" style="left:497px;top:826px;width:1px;height:22px;background:#e6e6e6;"></div>
<div class="a" style="left:1292px;top:821px;width:27px;height:30px;background:#e9ecef;border:1.5px solid #4a4f5c;border-radius:2px"></div>
<svg class="a" style="left:1297px;top:827px;" width="18" height="18" viewBox="0 0 18 18"><path d="M1.5 2.8 H16.5 M1.5 7 H16.5 M1.5 11.2 H16.5 M1.5 15.5 H16.5" stroke="#5a6676" stroke-width="1.2"/></svg>
<svg class="a" style="left:1324px;top:825px;" width="18" height="19" viewBox="0 0 18 19"><rect x="1.5" y="1.5" width="15" height="13" rx="1.5" stroke="#7a8594" stroke-width="1.2" fill="none"/><path d="M1 17.2 H17" stroke="#7a8594" stroke-width="1.2"/></svg>
</div>
<div class="a" style="left:180px;top:171px;width:1175px;height:681px;border-radius:6px;border:1px solid #8d97a3;box-shadow:inset 0 0 0 1px rgba(215,220,226,.8)"></div>
<div class="a" style="left:206px;top:171px;width:4px;height:2.5px;background:rgba(45,40,50,.75);"></div>
<div class="a" style="left:212px;top:171px;width:3px;height:2.5px;background:rgba(45,40,50,.75);"></div>
<div class="a" style="left:218px;top:171px;width:2px;height:2.5px;background:rgba(45,40,50,.75);"></div>
<div class="a" style="left:224px;top:171px;width:5px;height:2.5px;background:rgba(45,40,50,.75);"></div>
<div class="a" style="left:233px;top:171px;width:3px;height:2.5px;background:rgba(45,40,50,.75);"></div>
<div class="a" style="left:240px;top:171px;width:6px;height:2.5px;background:rgba(45,40,50,.75);"></div>
<div class="a" style="left:250px;top:171px;width:2px;height:2.5px;background:rgba(45,40,50,.75);"></div>
<div class="a" style="left:256px;top:171px;width:4px;height:2.5px;background:rgba(45,40,50,.75);"></div>
<div class="a" style="left:263px;top:171px;width:3px;height:2.5px;background:rgba(45,40,50,.75);"></div>
<div class="a" style="left:270px;top:171px;width:5px;height:2.5px;background:rgba(45,40,50,.75);"></div>
<div class="a" style="left:279px;top:171px;width:2px;height:2.5px;background:rgba(45,40,50,.75);"></div>
<div class="a" style="left:284px;top:171px;width:4px;height:2.5px;background:rgba(45,40,50,.75);"></div>
<div class="a" style="left:292px;top:171px;width:6px;height:2.5px;background:rgba(45,40,50,.75);"></div>
<div class="a" style="left:302px;top:171px;width:3px;height:2.5px;background:rgba(45,40,50,.75);"></div>
<div class="a" style="left:309px;top:171px;width:2px;height:2.5px;background:rgba(45,40,50,.75);"></div>
<div class="a" style="left:314px;top:171px;width:5px;height:2.5px;background:rgba(45,40,50,.75);"></div>
<div class="a" style="left:323px;top:171px;width:4px;height:2.5px;background:rgba(45,40,50,.75);"></div>
<div class="a" style="left:331px;top:171px;width:3px;height:2.5px;background:rgba(45,40,50,.75);"></div>
<div class="a" style="left:338px;top:171px;width:5px;height:2.5px;background:rgba(45,40,50,.75);"></div>
<div class="a" style="left:347px;top:171px;width:2px;height:2.5px;background:rgba(45,40,50,.75);"></div>
<div class="a" style="left:353px;top:171px;width:4px;height:2.5px;background:rgba(45,40,50,.75);"></div>
<div class="a" style="left:361px;top:171px;width:6px;height:2.5px;background:rgba(45,40,50,.75);"></div>
<div class="a" style="left:371px;top:171px;width:3px;height:2.5px;background:rgba(45,40,50,.75);"></div>
<div class="a" style="left:378px;top:171px;width:2px;height:2.5px;background:rgba(45,40,50,.75);"></div>
<div class="a" style="left:383px;top:171px;width:5px;height:2.5px;background:rgba(45,40,50,.75);"></div>
<div class="a" style="left:392px;top:171px;width:4px;height:2.5px;background:rgba(45,40,50,.75);"></div>
<div class="a" style="left:400px;top:171px;width:3px;height:2.5px;background:rgba(45,40,50,.75);"></div>
<div class="a" style="left:406px;top:171px;width:5px;height:2.5px;background:rgba(45,40,50,.75);"></div>
<div class="a" style="left:697px;top:172px;width:532px;height:680px;border-radius:8px;box-shadow:0 0 50px rgba(0,0,0,.28), 0 0 14px rgba(0,0,0,.12);clip-path:inset(0px -80px 0px -80px)"></div>
<div class="a" style="left:0;top:0;width:1536px;height:1024px;clip-path:inset(172px 307px 171px 697px round 8px)">
<div class="a" style="left:697px;top:172px;width:532px;height:681px;background:#f0f0f0;"></div>
<div class="a" style="left:697px;top:172px;width:532px;height:39px;background:#627986;"></div>
<svg class="a" style="left:710px;top:180px;" width="18" height="22" viewBox="0 0 18 22"><path d="M1.3 1.4 H11 L15.9 6.3 V20.6 H1.3Z" fill="#ffffff"/><path d="M11 1.4 V6.3 H15.9Z" fill="#e9edf1"/><circle cx="7" cy="9.5" r="2.1" fill="none" stroke="#a5b0bc" stroke-width="1.7"/><circle cx="7" cy="9.5" r="3" fill="none" stroke="#a5b0bc" stroke-width="0.9" stroke-dasharray="1.1 1.1"/><circle cx="11.3" cy="14.3" r="1.7" fill="none" stroke="#56687b" stroke-width="1.6"/><circle cx="11.3" cy="14.3" r="2.5" fill="none" stroke="#56687b" stroke-width="0.9" stroke-dasharray="1 1"/></svg>
<div class="t" style="left:735.00px;top:184.96px;font-size:16px;color:#eef2f4;letter-spacing:-0.2px;">ci.dll Properties</div>
<svg class="a" style="left:1199px;top:184px;" width="16" height="16" viewBox="0 0 16 16"><path d="M1.5 1.5 L14.5 14.5 M14.5 1.5 L1.5 14.5" stroke="#f2f4f6" stroke-width="1.4" fill="none"/></svg>
<div class="a" style="left:709px;top:224px;width:65px;height:23px;background:#f3f3f3;border:1px solid #e4e4e4;border-bottom:none"></div>
<div class="a" style="left:774px;top:224px;width:125px;height:23px;background:#f3f3f3;border:1px solid #e4e4e4;border-bottom:none"></div>
<div class="a" style="left:899px;top:224px;width:65.5px;height:23px;background:#f3f3f3;border:1px solid #e4e4e4;border-bottom:none"></div>
<div class="a" style="left:1026.5px;top:224px;width:121.5px;height:23px;background:#f3f3f3;border:1px solid #e4e4e4;border-bottom:none"></div>
<div class="a" style="left:707px;top:246px;width:511px;height:557px;background:#f9f9f9;border:1px solid #ebebeb"></div>
<div class="a" style="left:964.5px;top:221px;width:62.0px;height:27px;background:#f9f9f9;border:1px solid #e4e4e4;border-bottom:none"></div>
<div class="t" style="left:718.00px;top:229.72px;font-size:13.8px;color:#1a1a1a;letter-spacing:-0.08px;">General</div>
<div class="t" style="left:783.30px;top:229.72px;font-size:13.8px;color:#1a1a1a;letter-spacing:-0.08px;">Digital Signatures</div>
<div class="t" style="left:908.70px;top:229.72px;font-size:13.8px;color:#1a1a1a;letter-spacing:-0.08px;">Security</div>
<div class="t" style="left:974.80px;top:227.92px;font-size:13.8px;color:#1a1a1a;">Details</div>
<div class="t" style="left:1033.00px;top:229.72px;font-size:13.8px;color:#1a1a1a;letter-spacing:-0.08px;">Previous Versions</div>
<div class="a" style="left:726px;top:264px;width:418px;height:482px;background:#ffffff;border:1px solid #8a939e"></div>
<div class="a" style="left:836px;top:265px;width:1px;height:24px;background:#e6e6e6;"></div>
<div class="a" style="left:1118px;top:265px;width:1px;height:24px;background:#ececec;"></div>
<div class="t" style="left:733.00px;top:270.72px;font-size:13.8px;color:#1a1a1a;">Property</div>
<div class="t" style="left:843.00px;top:270.72px;font-size:13.8px;color:#1a1a1a;">Value</div>
<div class="t" style="left:739.00px;top:294.96px;font-size:15.4px;color:#2a6db5;letter-spacing:-0.1px;">Description</div>
<div class="a" style="left:820px;top:301px;width:314px;height:1px;background:#e1e7ee;"></div>
<div class="t" style="left:733.00px;top:321.52px;font-size:13.8px;color:#1a1a1a;letter-spacing:-0.15px;">File description</div>
<div class="t" style="left:843.00px;top:321.52px;font-size:13.8px;color:#1a1a1a;letter-spacing:0.02px;">Code Integrity Module</div>
<div class="t" style="left:733.00px;top:345.12px;font-size:13.8px;color:#1a1a1a;letter-spacing:-0.15px;">Type</div>
<div class="t" style="left:843.00px;top:345.12px;font-size:13.8px;color:#1a1a1a;letter-spacing:0.02px;">Application extension</div>
<div class="t" style="left:733.00px;top:368.72px;font-size:13.8px;color:#1a1a1a;letter-spacing:-0.15px;">File version</div>
<div class="t" style="left:843.00px;top:368.72px;font-size:13.8px;color:#1a1a1a;letter-spacing:0.02px;">10.0.22621.4111</div>
<div class="t" style="left:733.00px;top:392.32px;font-size:13.8px;color:#1a1a1a;letter-spacing:-0.15px;">Product name</div>
<div class="t" style="left:843.00px;top:392.32px;font-size:13.8px;color:#1a1a1a;letter-spacing:0.02px;">Microsoft® Windows® Operating System</div>
<div class="t" style="left:733.00px;top:415.92px;font-size:13.8px;color:#1a1a1a;letter-spacing:-0.15px;">Product version</div>
<div class="t" style="left:843.00px;top:415.92px;font-size:13.8px;color:#1a1a1a;letter-spacing:0.02px;">10.0.22621.4111</div>
<div class="a" style="left:731px;top:434px;width:388px;height:22.5px;background:#0078d7;"></div>
<div class="t" style="left:733.00px;top:439.52px;font-size:13.8px;color:#ffffff;letter-spacing:-0.15px;">Copyright</div>
<div class="t" style="left:843.00px;top:439.52px;font-size:13.8px;color:#ffffff;letter-spacing:0.02px;">© Microsoft Corporation. All rights reserved.</div>
<div class="t" style="left:733.00px;top:463.12px;font-size:13.8px;color:#1a1a1a;letter-spacing:-0.15px;">Size</div>
<div class="t" style="left:843.00px;top:463.12px;font-size:13.8px;color:#1a1a1a;letter-spacing:0.02px;">0.99 MB</div>
<div class="t" style="left:733.00px;top:486.72px;font-size:13.8px;color:#1a1a1a;letter-spacing:-0.15px;">Date modified</div>
<div class="t" style="left:843.00px;top:486.72px;font-size:13.8px;color:#1a1a1a;letter-spacing:0.02px;">8/28/2024 11:12 AM</div>
<div class="t" style="left:733.00px;top:510.32px;font-size:13.8px;color:#1a1a1a;letter-spacing:-0.15px;">Language</div>
<div class="t" style="left:843.00px;top:510.32px;font-size:13.8px;color:#1a1a1a;letter-spacing:0.02px;">English (United States)</div>
<div class="t" style="left:733.00px;top:533.92px;font-size:13.8px;color:#1a1a1a;letter-spacing:-0.15px;">Original filename</div>
<div class="t" style="left:843.00px;top:533.92px;font-size:13.8px;color:#1a1a1a;letter-spacing:0.02px;">ci.dll</div>
<div class="t" style="left:726.00px;top:763.58px;font-size:13.85px;color:#1267c0;text-decoration:underline;text-underline-offset:2px;text-decoration-skip-ink:none">Remove Properties and Personal Information</div>
<div class="a" style="left:910px;top:814.5px;width:97.5px;height:28.0px;background:#fdfdfd;border:1px solid #3b8ee0;border-radius:3px"></div>
<div class="t" style="left:958.50px;top:822.32px;font-size:13.8px;color:#1a1a1a;transform:translateX(-50%);">OK</div>
<div class="a" style="left:1017px;top:814.5px;width:97px;height:28.0px;background:#fdfdfd;border:1px solid #d4d4d4;border-radius:3px"></div>
<div class="t" style="left:1065.50px;top:822.32px;font-size:13.8px;color:#1a1a1a;transform:translateX(-50%);">Cancel</div>
<div class="a" style="left:1124px;top:814.5px;width:95px;height:28.0px;background:#f6f6f6;border:1px solid #ececec;border-radius:3px"></div>
<div class="t" style="left:1171.50px;top:822.32px;font-size:13.8px;color:#9a9a9a;transform:translateX(-50%);">Apply</div>
</div>
<div class="a" style="left:697px;top:172px;width:532px;height:681px;border-radius:8px;border:1.5px solid #5f7684"></div>
</body></html>
